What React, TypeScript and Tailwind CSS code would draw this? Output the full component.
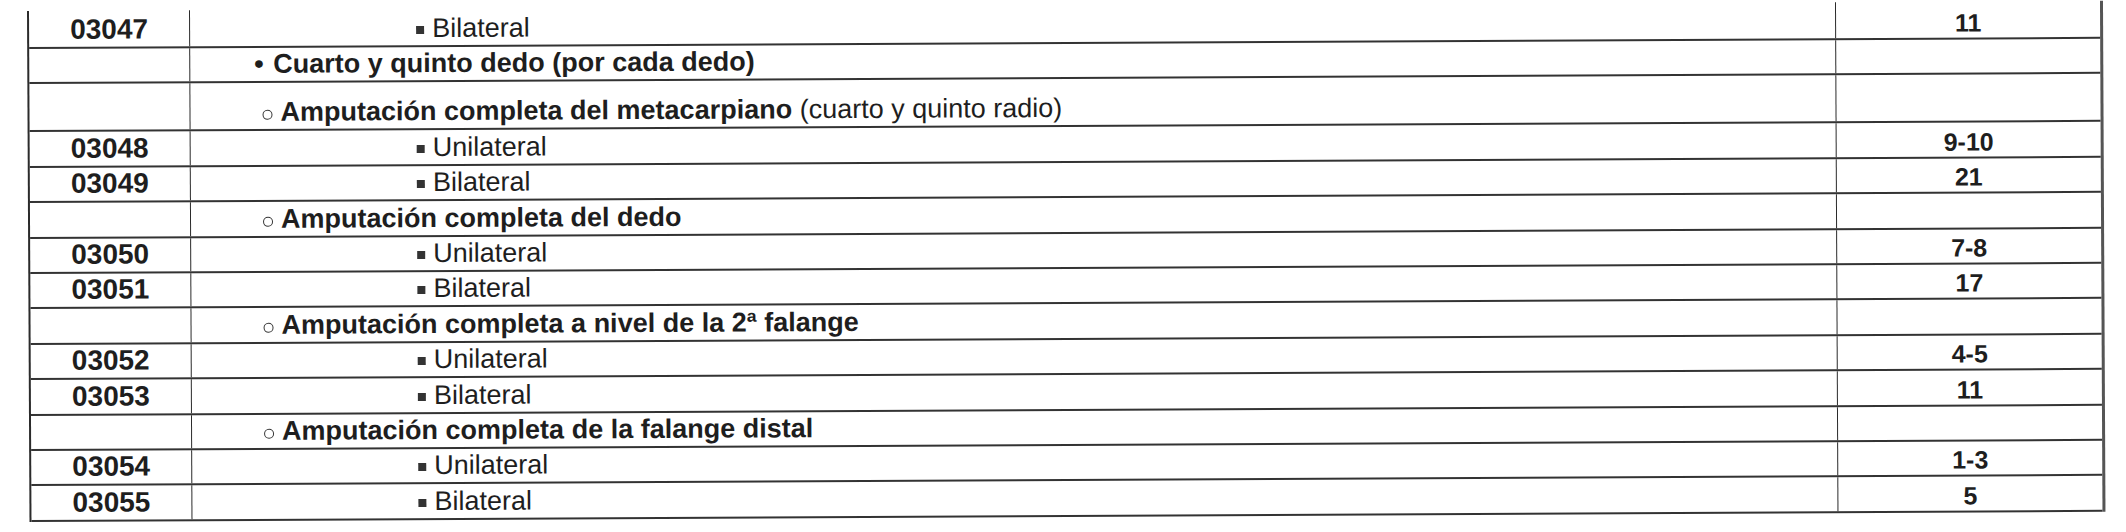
type Row = {
  code?: string;
  level: 1 | 2 | 3;
  bold?: string;
  text?: string;
  rest?: string;
  value?: string;
  h?: string;
};

const rows: Row[] = [
  { code: "03047", level: 3, text: "Bilateral", value: "11", h: "h-[38px]" },
  { level: 1, bold: "Cuarto y quinto dedo (por cada dedo)" },
  { level: 2, bold: "Amputación completa del metacarpiano", rest: " (cuarto y quinto radio)", h: "h-[48px]" },
  { code: "03048", level: 3, text: "Unilateral", value: "9-10" },
  { code: "03049", level: 3, text: "Bilateral", value: "21" },
  { level: 2, bold: "Amputación completa del dedo" },
  { code: "03050", level: 3, text: "Unilateral", value: "7-8" },
  { code: "03051", level: 3, text: "Bilateral", value: "17" },
  { level: 2, bold: "Amputación completa a nivel de la 2ª falange" },
  { code: "03052", level: 3, text: "Unilateral", value: "4-5" },
  { code: "03053", level: 3, text: "Bilateral", value: "11" },
  { level: 2, bold: "Amputación completa de la falange distal" },
  { code: "03054", level: 3, text: "Unilateral", value: "1-3" },
  { code: "03055", level: 3, text: "Bilateral", value: "5" },
];

function Bullet({ level }: { level: 1 | 2 | 3 }) {
  if (level === 1) return <span className="w-[19px] font-bold">•</span>;
  if (level === 2)
    return (
      <span className="w-[18px] h-full flex items-end pb-[6px]">
        <span className="w-[10px] h-[10px] rounded-full border-[1.5px] border-[#333]" />
      </span>
    );
  return (
    <span className="w-[16px] h-full flex items-end pb-[8px]">
      <span className="w-[8px] h-[8px] bg-[#333]" />
    </span>
  );
}

const indent = { 1: "pl-[64px]", 2: "pl-[72px]", 3: "pl-[226px]" };

export default function App() {
  return (
    <div className="w-[2126px] h-[532px] bg-white overflow-hidden pl-[27px] pt-[11px] font-['Liberation_Sans',Arial,sans-serif] text-[#1e1e1e]">
      <div className="w-[2076px] origin-top-left -rotate-[0.28deg] border-l-2 border-r-[3px] border-l-[#2b2b2b] border-r-[#555]">
        {rows.map((r, i) => (
          <div
            key={i}
            className={`grid grid-cols-[161px_1fr_264px] border-b-2 border-[#333] ${r.h ?? "h-[35.4px]"}`}
          >
            <div className="flex items-end justify-center pb-[3px] border-r border-[#2b2b2b] text-[28px] font-bold leading-none">
              {r.code}
            </div>
            <div className={`flex items-end pb-[3px] border-r border-[#2b2b2b] text-[27px] leading-none ${indent[r.level]}`}>
              <Bullet level={r.level} />
              {r.bold && <span className="font-bold">{r.bold}</span>}
              {r.rest && <span className="whitespace-pre">{r.rest}</span>}
              {r.text && <span>{r.text}</span>}
            </div>
            <div className="flex items-end justify-center pb-[2px] text-[25px] font-bold leading-none">
              {r.value}
            </div>
          </div>
        ))}
      </div>
    </div>
  );
}
